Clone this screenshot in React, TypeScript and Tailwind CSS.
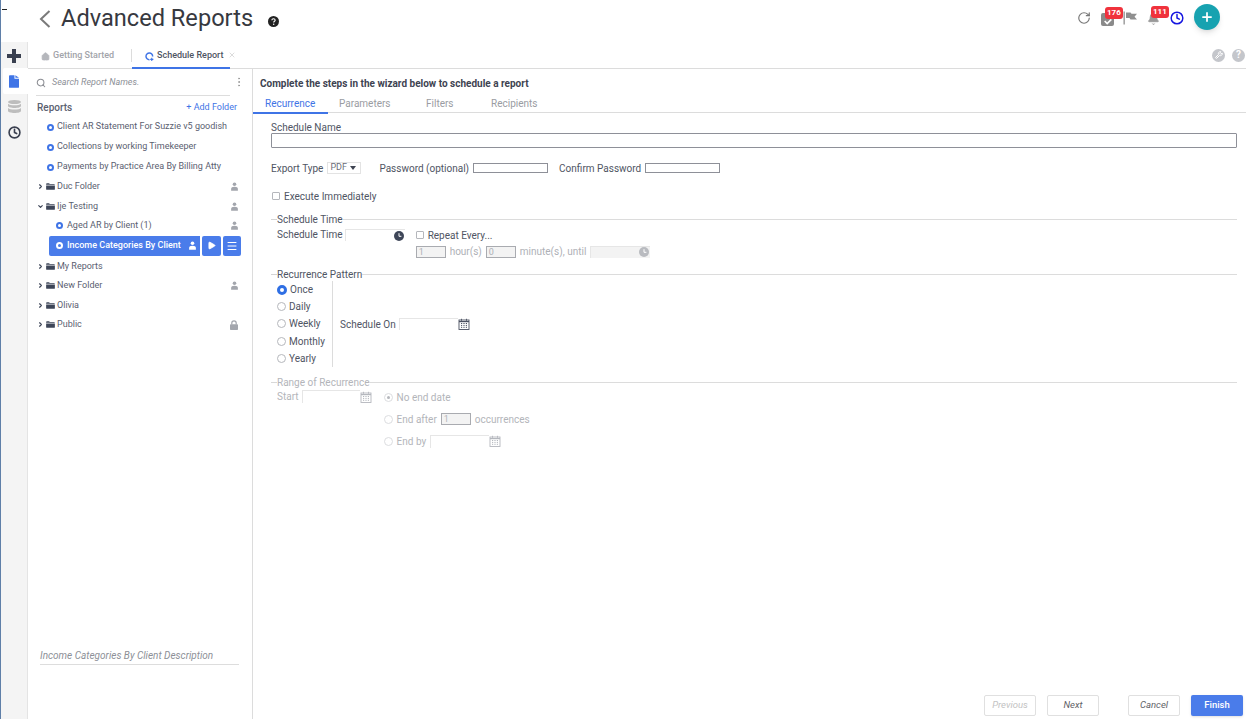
import { ChevronDown, ChevronRight, Clock, Bell, Home, Menu, MoreVertical, Play, Plus, RotateCw, Search, X, Wrench } from 'lucide-react';

const font = { fontFamily: 'Roboto, "Liberation Sans", sans-serif' };

function PersonIcon({ className }: { className: string }) {
  return (
    <svg viewBox="0 0 12 12" className={className} fill="currentColor">
      <circle cx="6" cy="3" r="2.4" />
      <path d="M1.5 11.5V9.2C1.5 7.4 3 6.3 6 6.3s4.5 1.1 4.5 2.9v2.3z" />
    </svg>
  );
}

function LockIcon() {
  return (
    <svg viewBox="0 0 10 10" className="w-[10px] h-[10px] text-[#a3a6ad]">
      <path d="M2.800 4.500V3a2.200 2.200 0 014.400 0v1.500" fill="none" stroke="currentColor" strokeWidth="1.200" />
      <rect x="1" y="4.300" width="8" height="5.700" rx="0.800" fill="currentColor" />
    </svg>
  );
}

function FolderIcon() {
  return (
    <svg viewBox="0 0 10 8" className="w-[9px] h-[7px] text-[#3e4658]" fill="currentColor">
      <path d="M0 1.2C0 .6.4.2 1 .2h2.4l.8.9H9c.6 0 1 .3 1 .9H0z" />
      <path d="M0 2.8h10V7c0 .5-.4.8-1 .8H1c-.6 0-1-.3-1-.8z" />
    </svg>
  );
}

function Bullet({ white }: { white?: boolean }) {
  return <span className={`w-[7px] h-[7px] rounded-full border-2 bg-transparent shrink-0 ${white ? 'border-white' : 'border-[#3f74e6]'}`} />;
}

function CalendarIcon({ faded }: { faded?: boolean }) {
  return (
    <svg viewBox="0 0 12 12" className={`w-[12px] h-[12px] ${faded ? 'text-[#b4b7bd]' : 'text-[#4a5060]'}`} fill="none" stroke="currentColor">
      <rect x="1" y="2" width="10" height="9.5" strokeWidth="0.9" />
      <path d="M1 3.6h10" strokeWidth="1.2" />
      <path d="M3.5 .8v2M8.5 .8v2" strokeWidth="0.9" />
      <path d="M3 5.5h1.2M5.4 5.5h1.2M7.8 5.5H9M3 7.4h1.2M5.4 7.4h1.2M7.8 7.4H9M3 9.3h1.2M5.4 9.3h1.2M7.8 9.3H9" strokeWidth="1" />
    </svg>
  );
}

function SolidClock({ faded }: { faded?: boolean }) {
  return (
    <svg viewBox="0 0 10 10" className="w-[10px] h-[10px]">
      <circle cx="5" cy="5" r="5" fill={faded ? '#b9bbc0' : '#3e4658'} />
      <path d="M5 2.2V5.3H7.4" stroke="white" strokeWidth="1" fill="none" />
    </svg>
  );
}

function Radio({ checked, faded, dot }: { checked?: boolean; faded?: boolean; dot?: boolean }) {
  if (checked) {
    return <span className="w-[10px] h-[10px] rounded-full border-[3px] border-[#2f6fe4] bg-white shrink-0" />;
  }
  return (
    <span className={`w-[9px] h-[9px] rounded-full border flex items-center justify-center shrink-0 ${faded ? 'border-[#dcdde0]' : 'border-[#b5b7bc]'}`}>
      {dot && <span className="w-[3px] h-[3px] rounded-full bg-[#b5b7bc]" />}
    </span>
  );
}

function FieldsetTitle({ label, faded }: { label: string; faded?: boolean }) {
  return (
    <div className="flex items-center h-[12px]">
      <div className={`w-[6px] h-px ${faded ? 'bg-[#d8d8d8]' : 'bg-[#d4d4d4]'}`} />
      <span className={`text-[10px] leading-[12px] pt-[2px] ${faded ? 'text-[#b3b5ba]' : 'text-[#4f5563]'}`}>{label}</span>
      <div className="flex-1 h-px bg-[#dcdcdc]" />
    </div>
  );
}

function TreeRow({ label, open, right }: { label: string; open?: boolean; right?: 'user' | 'lock' }) {
  return (
    <div className="flex items-center h-[19.5px] pl-[9px] pr-[13px] text-[#5a6070]">
      {open ? <ChevronDown className="w-[7px] h-[7px] text-[#3e4658]" strokeWidth={4} /> : <ChevronRight className="w-[7px] h-[7px] text-[#3e4658]" strokeWidth={4} />}
      <span className="ml-[2px] mr-[2px] flex"><FolderIcon /></span>
      <span className="text-[9px] flex-1">{label}</span>
      {right === 'user' && <PersonIcon className="w-[9px] h-[9px] text-[#a3a6ad]" />}
      {right === 'lock' && <LockIcon />}
    </div>
  );
}

function ReportRow({ label }: { label: string }) {
  return (
    <div className="flex items-center h-[20px] pl-[19px] gap-[3px] text-[9px] text-[#5a6070]">
      <Bullet />
      <span>{label}</span>
    </div>
  );
}

export default function App() {
  return (
    <div className="relative w-[1257px] h-[719px] bg-white flex flex-col overflow-hidden border-l border-[#5f7fa8] text-[#4f5563]" style={font}>
      <div className="absolute left-[1px] top-[9px] w-[5px] h-px bg-[#222]" />
      {/* header */}
      <div className="h-[42px] flex items-start pt-[4px] pl-[37px] pr-[37px] shrink-0">
        <div className="flex items-center h-[30px]">
          <svg viewBox="0 0 12 18" className="ml-[1px] w-[12px] h-[18px] text-[#7a7a7a]" fill="none" stroke="currentColor" strokeWidth="2">
            <path d="M10.500 1L2 9l8.500 8" />
          </svg>
          <span className="ml-[10px] text-[23.6px] leading-none text-[#37393f]">Advanced Reports</span>
          <svg viewBox="0 0 12 12" className="ml-[15px] mt-[5px] w-[11px] h-[11px]">
            <circle cx="6" cy="6" r="6" fill="#222" />
            <path d="M4.2 4.6c0-1 .8-1.6 1.8-1.6s1.8.6 1.8 1.5c0 1.2-1.6 1.2-1.6 2.6" stroke="white" strokeWidth="1.2" fill="none" />
            <circle cx="6.2" cy="9" r=".8" fill="white" />
          </svg>
        </div>
        <div className="ml-auto flex items-center h-[26px]">
          <RotateCw className="w-[14px] h-[14px] text-[#777] mt-[2px]" strokeWidth={2} />
          <div className="relative ml-[10px] mt-[4px] w-[13px] h-[13px] bg-[#8a8a8a] rounded-[2px] flex items-center justify-center">
            <svg viewBox="0 0 12 12" className="w-[10px] h-[10px] mt-[3px]" fill="none" stroke="white" strokeWidth="2"><path d="M2 6l3 3 5-5" /></svg>
            <span className="absolute -top-[6px] left-[4px] h-[12px] px-[2px] rounded-[3px] bg-[#f0323c] text-white text-[8px] leading-[12px] font-bold">176</span>
          </div>
          <svg viewBox="0 0 14 14" className="ml-[9px] mt-[2px] w-[14px] h-[14px] text-[#8f8f8f]" fill="currentColor">
            <rect x="0.5" y="0.5" width="1.3" height="13" />
            <path d="M3 1.5h4.500l1 1.200H14l-2.500 3L14 8.500H7.500L6.500 7H3z" />
          </svg>
          <div className="relative ml-[10px] mt-[4px]">
            <Bell className="w-[13px] h-[14px] text-[#999]" fill="currentColor" strokeWidth={1.5} />
            <span className="absolute -top-[6px] left-[4px] h-[12px] px-[2px] rounded-[3px] bg-[#f0323c] text-white text-[8px] leading-[12px] font-bold">111</span>
          </div>
          <Clock className="ml-[10px] mt-[2px] w-[14px] h-[14px] text-[#1616e0]" strokeWidth={2.5} />
          <div className="ml-[10px] w-[26px] h-[26px] rounded-full bg-[#17a2b0] flex items-center justify-center shadow-md">
            <Plus className="w-[14px] h-[14px] text-white" strokeWidth={3} />
          </div>
        </div>
      </div>

      <div className="flex flex-1 min-h-0">
        {/* icon rail */}
        <div className="w-[27px] bg-[#f4f4f4] flex flex-col items-center pt-[1px] border-r border-[#e4e4e4] shrink-0">
          <div className="h-[25px] flex items-center justify-center w-full">
            <svg viewBox="0 0 14 14" className="w-[14px] h-[14px] text-[#3a4050]" fill="currentColor"><path d="M5 0h4v5h5v4H9v5H5V9H0V5h5z" /></svg>
          </div>
          <div className="h-[26px] w-[25px] ml-[2px] flex items-center justify-center bg-white rounded-l-[2px]">
            <svg viewBox="0 0 11 14" className="w-[10px] h-[13px] -ml-[2px] text-[#3f74e6]" fill="currentColor"><path d="M0 1a1 1 0 011-1h5v4h5v9a1 1 0 01-1 1H1a1 1 0 01-1-1z" /><path d="M7 0l4 3H7z" /></svg>
          </div>
          <div className="h-[25px] flex items-center justify-center w-full">
            <svg viewBox="0 0 13 13" className="w-[13px] h-[13px] text-[#bdbdbd]" fill="currentColor">
              <ellipse cx="6.5" cy="2" rx="6.5" ry="2" />
              <path d="M0 3.8c1.2 1 3.4 1.5 6.5 1.5S11.800 4.800 13 3.800V6c0 1.100-2.900 2-6.500 2S0 7.100 0 6z" />
              <path d="M0 8c1.200 1 3.400 1.500 6.500 1.500S11.800 9 13 8v3c0 1.100-2.900 2-6.500 2S0 12.100 0 11z" />
            </svg>
          </div>
          <div className="h-[26px] flex items-center justify-center w-full">
            <Clock className="w-[13px] h-[13px] text-[#3a4050]" strokeWidth={3} />
          </div>
        </div>

        <div className="flex-1 flex flex-col min-w-0 pr-[11px]">
          {/* tab bar */}
          <div className="h-[27px] flex items-stretch border-b border-[#dcdcdc] shrink-0">
            <div className="w-[103px] flex items-center pl-[13px] pt-[2px] gap-[3px] text-[9px] text-[#a2a4aa] font-medium">
              <Home className="w-[9px] h-[9px] text-[#b5b7bc]" fill="currentColor" />
              Getting Started
            </div>
            <div className="w-px h-[13px] mt-[7px] bg-[#dcdcdc]" />
            <div className="w-[98px] flex items-center justify-start pl-[13px] pt-[3px] gap-[3px] text-[9px] text-[#4f5563] font-medium border-b-2 border-[#3f74e6] h-[27px]">
              <svg viewBox="0 0 10 10" className="w-[9px] h-[9px] text-[#3f74e6]" fill="none" stroke="currentColor" strokeWidth="1.6">
                <path d="M5 8.500A3.700 3.700 0 118.500 5" />
                <path d="M7.500 6.500v3.500M5.800 8.200h3.500" strokeWidth="1.200" />
              </svg>
              Schedule Report
            </div>
            <X className="-ml-[2px] mt-[9px] w-[8px] h-[8px] text-[#c8c8c8]" />
            <div className="ml-auto flex items-center gap-[7px] pr-[1px]">
              <div className="w-[13px] h-[13px] rounded-full bg-[#c4c6cb] flex items-center justify-center">
                <Wrench className="w-[8px] h-[8px] text-white" strokeWidth={3} />
              </div>
              <div className="w-[13px] h-[13px] rounded-full bg-[#c4c6cb] flex items-center justify-center text-white text-[10px] font-bold leading-none">?</div>
            </div>
          </div>

          <div className="flex flex-1 min-h-0">
            {/* sidebar */}
            <div className="w-[225px] border-r border-[#dcdcdc] flex flex-col shrink-0">
              <div className="mx-[8px] mt-[1px] h-[26px] pr-[2px] flex items-center justify-between border-b border-[#dddddd] w-[194px] shrink-0">
                <div className="flex items-center gap-[6px]">
                  <Search className="w-[10px] h-[10px] text-[#8b8d93]" strokeWidth={2.5} />
                  <span className="text-[9px] italic text-[#8d9097]">Search Report Names.</span>
                </div>
              </div>
              <div className="flex items-center justify-between pl-[9px] pr-[15px] h-[20px] mt-px shrink-0">
                <span className="text-[10px] font-medium text-[#5a6070]">Reports</span>
                <span className="text-[9px] text-[#3f74e6] mt-[2px]">+ Add Folder</span>
              </div>
              <ReportRow label="Client AR Statement For Suzzie v5 goodish" />
              <ReportRow label="Collections by working Timekeeper" />
              <ReportRow label="Payments by Practice Area By Billing Atty" />
              <TreeRow label="Duc Folder" right="user" />
              <TreeRow label="Ije Testing" open right="user" />
              <div className="flex items-center h-[19.5px] pl-[28px] pr-[13px] gap-[4px] text-[9px] text-[#5a6070]">
                <Bullet />
                <span className="flex-1">Aged AR by Client (1)</span>
                <PersonIcon className="w-[9px] h-[9px] text-[#a3a6ad]" />
              </div>
              <div className="flex h-[20px] ml-[21px] mb-px gap-[2px] text-white shrink-0">
                <div className="w-[151px] bg-[#4a7cea] rounded-l-[2px] flex items-center pl-[7px] pr-[3px] gap-[4px] text-[9px] font-medium">
                  <Bullet white />
                  <span className="flex-1 whitespace-nowrap">Income Categories By Client</span>
                  <PersonIcon className="w-[9px] h-[9px] text-white" />
                </div>
                <div className="w-[18.5px] bg-[#4a7cea] flex items-center justify-center rounded-[2px]">
                  <Play className="w-[9px] h-[9px]" fill="currentColor" />
                </div>
                <div className="w-[18.5px] bg-[#4a7cea] flex items-center justify-center rounded-[2px]">
                  <Menu className="w-[12px] h-[12px]" strokeWidth={2} />
                </div>
              </div>
              <TreeRow label="My Reports" />
              <TreeRow label="New Folder" right="user" />
              <TreeRow label="Olivia" />
              <TreeRow label="Public" right="lock" />
              <div className="mt-auto mx-[12px] mb-[54px] w-[199px] h-[18px] pt-px border-b border-[#dddddd] text-[10px] italic text-[#8d9097]">
                Income Categories By Client Description
              </div>
            </div>

            {/* wizard */}
            <div className="relative flex-1 flex flex-col min-w-0">
              <MoreVertical className="absolute -left-[20px] top-[7px] w-[12px] h-[12px] text-[#9a9a9a]" strokeWidth={2} />
              <div className="pl-[7px] pt-[8px] h-[27px] text-[10px] font-bold text-[#3e4351] leading-[14px] shrink-0">
                Complete the steps in the wizard below to schedule a report
              </div>
              <div className="h-[17px] pt-px flex text-[10px] leading-[14px] text-[#9a9ca2] border-b border-[#dcdcdc] shrink-0 box-border">
                <div className="w-[75px] h-[17px] pl-[12px] text-[#3f74e6] border-b-2 border-[#3f74e6]">Recurrence</div>
                <div className="w-[87px] pl-[11px]">Parameters</div>
                <div className="w-[65px] pl-[11px]">Filters</div>
                <div className="pl-[11px]">Recipients</div>
              </div>

              <div className="pl-[18px] pr-[9px] mt-px text-[10px] text-[#4f5563]">
                <div className="mt-[8px] h-[11px] leading-[12px]">Schedule Name</div>
                <div className="h-[15px] border border-[#8e9098] rounded-[1px]" />

                <div className="mt-[13px] flex items-center h-[14px]">
                  <span>Export Type</span>
                  <div className="ml-[4px] w-[34px] h-[12px] border border-[#e3e3e3] flex items-center justify-between pl-[2px] pr-[4px] text-[9px] text-[#6a6e78]">
                    PDF
                    <span className="w-0 h-0 border-l-[3px] border-r-[3px] border-t-[4px] border-l-transparent border-r-transparent border-t-[#3e4351]" />
                  </div>
                  <span className="ml-[18px]">Password (optional)</span>
                  <div className="ml-[4px] w-[75px] h-[10px] border border-[#8e9098]" />
                  <span className="ml-[11px]">Confirm Password</span>
                  <div className="ml-[4px] w-[75px] h-[10px] border border-[#8e9098]" />
                </div>

                <div className="mt-[14px] flex items-center h-[14px] gap-[4px]">
                  <span className="ml-px w-[8px] h-[8px] border border-[#b5b7bc] rounded-[1px]" />
                  Execute Immediately
                </div>

                <div className="mt-[10px]"><FieldsetTitle label="Schedule Time" /></div>
                <div className="pl-[6px] mt-[3px] flex">
                  <span className="leading-[14px]">Schedule Time</span>
                  <div className="ml-[2px] w-[60px] h-[12px] border-t border-l border-[#e6e6e6] flex items-center justify-end pr-[1px] mt-[1px]">
                    <SolidClock />
                  </div>
                  <div className="ml-[11px]">
                    <div className="flex items-center h-[14px] gap-[4px]">
                      <span className="w-[8px] h-[8px] border border-[#b5b7bc] rounded-[1px]" />
                      Repeat Every...
                    </div>
                    <div className="flex items-center mt-[3px] text-[#aeb0b6] h-[13px]">
                      <div className="w-[30px] h-[12px] border border-[#a9abb0] bg-[#f3f3f3] text-[9px] leading-[10px] pl-[2px]">1</div>
                      <span className="ml-[4px]">hour(s)</span>
                      <div className="ml-[4px] w-[30px] h-[12px] border border-[#a9abb0] bg-[#f3f3f3] text-[9px] leading-[10px] pl-[2px]">0</div>
                      <span className="ml-[4px]">minute(s), until</span>
                      <div className="ml-[4px] w-[60px] h-[12px] bg-[#f3f3f3] border-t border-l border-[#e6e6e6] flex items-center justify-end pr-[1px]">
                        <SolidClock faded />
                      </div>
                    </div>
                  </div>
                </div>

                <div className="mt-[10px]"><FieldsetTitle label="Recurrence Pattern" /></div>
                <div className="flex pl-[6px] h-[86px] mt-[1px]">
                  <div className="w-[56px] border-r border-[#dcdcdc] flex flex-col">
                    {['Once', 'Daily', 'Weekly', 'Monthly', 'Yearly'].map((r, i) => (
                      <div key={r} className="flex items-center h-[17.2px] gap-[3px]">
                        <Radio checked={i === 0} />
                        <span>{r}</span>
                      </div>
                    ))}
                  </div>
                  <div className="flex items-center pl-[7px] h-[86px]">
                    <span>Schedule On</span>
                    <div className="ml-[3px] w-[59px] h-[12px] border-t border-l border-[#e6e6e6]" />
                    <CalendarIcon />
                  </div>
                </div>

                <div className="mt-[9px]"><FieldsetTitle label="Range of Recurrence" faded /></div>
                <div className="flex pl-[6px] mt-[2px] text-[#b3b5ba]">
                  <div className="flex items-start h-[14px]">
                    <span className="leading-[14px]">Start</span>
                    <div className="ml-[3px] w-[58px] h-[13px] border-t border-l border-[#e6e6e6]" />
                    <div className="mt-[1px]"><CalendarIcon faded /></div>
                  </div>
                  <div className="ml-[12px] flex flex-col">
                    <div className="flex items-center h-[14px] gap-[4px]">
                      <Radio faded dot />
                      No end date
                    </div>
                    <div className="flex items-center h-[14px] gap-[4px] mt-[8px]">
                      <Radio faded />
                      End after
                      <div className="w-[30px] h-[12px] border border-[#a9abb0] bg-[#f3f3f3] text-[9px] leading-[10px] pl-[2px]">1</div>
                      occurrences
                    </div>
                    <div className="flex items-center h-[14px] gap-[4px] mt-[8px]">
                      <Radio faded />
                      End by
                      <div className="w-[59px] h-[13px] border-t border-l border-[#e6e6e6]" />
                      <div className="-ml-[4px]"><CalendarIcon faded /></div>
                    </div>
                  </div>
                </div>
              </div>

              {/* footer buttons */}
              <div className="mt-auto mb-[4px] flex justify-end items-center text-[9.5px] italic h-[20px] pr-[3px]">
                <div className="w-[52px] h-[21px] border border-[#e0e0e0] rounded-[2px] flex items-center justify-center text-[#c2c2c2]">Previous</div>
                <div className="ml-[11px] w-[52px] h-[21px] border border-[#e0e0e0] rounded-[2px] flex items-center justify-center text-[#5f6268]">Next</div>
                <div className="ml-[29px] w-[52px] h-[21px] border border-[#e0e0e0] rounded-[2px] flex items-center justify-center text-[#5f6268]">Cancel</div>
                <div className="ml-[11px] w-[52px] h-[21px] rounded-[2px] bg-[#4a7cea] flex items-center justify-center text-white not-italic font-medium shadow-sm">Finish</div>
              </div>
            </div>
          </div>
        </div>
      </div>
    </div>
  );
}
